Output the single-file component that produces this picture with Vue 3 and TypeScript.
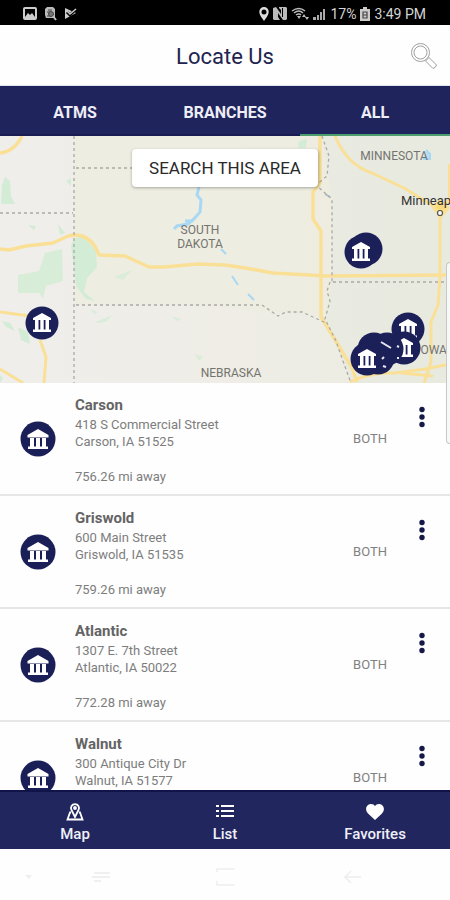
<script setup lang="ts">
import { ref } from 'vue'

interface Place {
  name: string
  street: string
  city: string
  distance?: string
}

interface Pin {
  x: number
  y: number
  icon: boolean
}

const tabs: string[] = ['ATMS', 'BRANCHES', 'ALL']
const activeTab = ref('ALL')

const places: Place[] = [
  { name: 'Carson', street: '418 S Commercial Street', city: 'Carson, IA 51525', distance: '756.26 mi away' },
  { name: 'Griswold', street: '600 Main Street', city: 'Griswold, IA 51535', distance: '759.26 mi away' },
  { name: 'Atlantic', street: '1307 E. 7th Street', city: 'Atlantic, IA 50022', distance: '772.28 mi away' },
  { name: 'Walnut', street: '300 Antique City Dr', city: 'Walnut, IA 51577' },
]

const pins: Pin[] = [
  { x: 42, y: 323, icon: true },
  { x: 366, y: 249, icon: false },
  { x: 361, y: 252, icon: true },
  { x: 408, y: 329, icon: true },
  { x: 404, y: 348, icon: true },
  { x: 387, y: 349, icon: false },
  { x: 374, y: 349, icon: false },
  { x: 378, y: 358, icon: false },
  { x: 367, y: 359, icon: true },
]
</script>

<template>
  <div class="screen">
    <div class="status">
      <div class="status-group">
        <svg width="14" height="13" viewBox="0 0 14 13"><rect x="1" y="1" width="12" height="11" rx="1" fill="none" stroke="#ccc" stroke-width="2" /><path d="M2 10l3-4 2 2 2-2 3 4v2H2z" fill="#ccc" /></svg>
        <svg width="13" height="14" viewBox="0 0 13 14"><path d="M3 0h6l2 2v9H2L1 8V2z" fill="#bbb" /><path d="M4 3h4M3 5h3M3 9h3" stroke="#444" /><circle cx="7" cy="7" r="2.500" fill="#777" stroke="#444" /><path d="M9 9l3 4" stroke="#bbb" stroke-width="2" /></svg>
        <svg width="13" height="13" viewBox="0 0 13 13"><path d="M1 1l11 5L1 12z" fill="#ccc" /><path d="M3 5l3 3 6-6" fill="none" stroke="#000" stroke-width="3" /><path d="M3 4l3 3 6-5" fill="none" stroke="#ccc" stroke-width="1.500" /></svg>
      </div>
      <div class="status-group right">
        <svg width="10" height="14" viewBox="0 0 10 14"><path d="M5 0a4.700 4.700 0 00-4.700 5C.3 8 3 11 5 14c2-3 4.700-6 4.700-9A4.700 4.700 0 005 0zm0 2.500a2.500 2.500 0 110 5 2.500 2.500 0 010-5z" fill="#ddd" fill-rule="evenodd" /></svg>
        <svg width="14" height="13" viewBox="0 0 14 13"><path d="M0 1l3-1 5 7V3l-2-2V0h7l1 1v11l-1 1h-3L5 6v4l2 3H1l-1-1z" fill="#bbb" /><path d="M9.500 1v9" stroke="#000" /></svg>
        <svg width="18" height="13" viewBox="0 0 18 13"><path d="M1 4q7-5 13 0M3 6q5-4 9 0M5 8q3-2 5 0" fill="none" stroke="#bbb" stroke-width="1.500" /><path d="M6 9h4l-2 3zM11 10l2-3 2 3zM14 10h4l-2 3z" fill="#bbb" /></svg>
        <svg width="13" height="12" viewBox="0 0 13 12"><path d="M0 12V9h3v3zM4 12V7h2v5zM7 12V4h2v8zM10 12V1h2v11z" fill="#aaa" /></svg>
        <span>17%</span>
        <svg width="10" height="14" viewBox="0 0 10 14"><path d="M3 0h4v2h3v12H0V2h3z" fill="#ccc" /><path d="M3 5h4v6H3zM3 8h4" fill="none" stroke="#444" stroke-width="1.200" /></svg>
        <span>3:49 PM</span>
      </div>
    </div>

    <header class="header">
      <h1>Locate Us</h1>
      <button class="search" type="button" aria-label="Search">
        <svg width="28" height="28" viewBox="0 0 28 28" fill="none" stroke="#a0a0a0" stroke-width="1"><circle cx="10.500" cy="10.500" r="9" /><circle cx="10.500" cy="10.500" r="6.500" /><path d="M15.500 19l3.500-3.500 7.500 7.500q-.5 2.500-3.500 3.500z" /></svg>
      </button>
    </header>

    <nav class="tabs">
      <button v-for="tab in tabs" :key="tab" type="button" :class="{ active: tab === activeTab }" @click="activeTab = tab">{{ tab }}</button>
    </nav>

    <section class="map">
      <svg class="map-art" viewBox="0 136 450 247" preserveAspectRatio="xMidYMid slice">
        <defs>
          <linearGradient id="land" x1="0" x2="1">
            <stop offset="0" stop-color="#f0eeeb" />
            <stop offset=".5" stop-color="#efede6" />
            <stop offset="1" stop-color="#ebece1" />
          </linearGradient>
        </defs>
        <rect y="136" width="450" height="247" fill="url(#land)" />
        <path d="M74 136H325L332 200V285H340L326 316 262 311 200 305H74z" fill="#eeecdf" opacity=".75" />
        <path d="M322 136H450V383H350L326 320 332 282V200z" fill="#e7eadf" opacity=".7" />
        <g fill="#d3ecd5">
          <path d="M5 177l5 4 1 15 4 8H1l1-19z" />
          <path d="M18 275l21-4 6-18 17-4 1 32-17 5-3 13-4-6H18z" opacity=".85" />
          <path d="M71 246q2-10 13-9l12 14 1 16-10 11-3 14 11 9-9-2-10-13z" />
          <path d="M2 321l8 2 5 8-9-4zM18 327l10 5 2 12-9-4zM28 225l8 1-2 4zM58 224l7 9-5 2zM66 181l5-3v8z" />
          <path d="M114 277l18-7-9 10zM90 309l8 3-4 2zM95 322l18-7-7 7-9 1zM171 316l10 3-4 2zM194 354l9 3-4 4z" opacity=".75" />
          <path d="M299 141l8-2-1 9h-8zM0 375l3 3-3 5z" />
        </g>
        <g fill="none" stroke="#a8d8f3" stroke-width="2">
          <path d="M199 187l-2 8 4 5-1 12-6 7-6 5-11 2-3 3M193 221h-8" stroke-width="3" />
          <path d="M221 249l5 5M232 276l6 9M248 294l6 6" />
          <path d="M426 150l4 4v5h-7" fill="#b8dff4" />
          <path d="M325 194l5 3" stroke="#a7bdcb" />
        </g>
        <g fill="none" stroke="#f9e096" stroke-width="3.500" stroke-linejoin="round">
          <path d="M0 153q12-1 20-13l2-4" />
          <path d="M0 249l9 1 17-4 27-3 15-7q22-5 31 19l26 1 24 11h15l34-3 27 1q22 3 48 8l54 3 121-1" />
          <path d="M320 136v47l-7 9v27l8 12v86l13 21 18 30 5 14" />
          <path d="M335 136q12 29 37 37l32 15 36 22v68l-2 27-7 17v40l-7 21" stroke-width="3" />
          <path d="M450 164v36l-10 10" stroke-width="4" />
          <path d="M0 312l30 4M40 340l6 17-2 26M0 369l23 14" stroke-width="3" />
          <path d="M350 382q20-10 45-9l30-4 25-5M401 373l32 3" stroke-width="3" />
          <path d="M433 207l7-6 8 7-7 8z" fill="#f9d978" />
        </g>
        <path class="state-line" d="M74 136V383M76 168H132M0 213H73M76 305H262l16 11 8-4h16l24 11M322 136l7 20-2 20-11 9 9 8 7 6v83M450 282H330l-3 9 3 10-5 18 11 22 7 20 8 22" />
        <g class="map-label">
          <text x="200" y="234">SOUTH</text>
          <text x="200" y="248">DAKOTA</text>
          <text x="394" y="160">MINNESOTA</text>
          <text x="231" y="377">NEBRASKA</text>
          <text x="432" y="354">IOWA</text>
        </g>
        <text class="city" x="401" y="205">Minneap</text>
        <circle cx="440" cy="213" r="2.500" fill="#fff" stroke="#555" stroke-width="1.200" />
        <g v-for="(pin, i) in pins" :key="i" :transform="`translate(${pin.x} ${pin.y})`">
          <circle r="16.500" fill="#1c2058" />
          <path v-if="pin.icon" d="M0-10L-9-5v2H9v-2zM-7-3h3.500v10H-7zM-1.700-3h3.400v10h-3.400zM3.500-3H7v10H3.500zM-9 6.500H9V9H-9z" fill="#fff" />
        </g>
        <path d="M381 342l10 6M397 346l2 1M384 357l-2 2M397 358h2M383 366l3 1" stroke="#e8e8f2" stroke-width="2" />
      </svg>
      <button class="search-area" type="button">SEARCH THIS AREA</button>
      <div class="edge-panel"></div>
    </section>

    <main class="list">
      <article v-for="place in places" :key="place.name" class="row">
        <svg class="badge" viewBox="0 0 36 36"><circle cx="18" cy="18" r="17.500" fill="#1b1f57" /><path d="M18 8L7.500 14v2.500h21V14zM10 16h4v10h-4zM16 16h4v10h-4zM22 16h4v10h-4zM8 25.500h20V28H8z" fill="#fff" /></svg>
        <div class="details">
          <h2>{{ place.name }}</h2>
          <p>{{ place.street }}</p>
          <p>{{ place.city }}</p>
          <p v-if="place.distance" class="distance">{{ place.distance }}</p>
        </div>
        <span class="kind">BOTH</span>
        <button class="more" type="button" :aria-label="place.name + ' options'">
          <svg width="6" height="22" viewBox="0 0 6 22" fill="#161947"><circle cx="3" cy="3.500" r="2.700" /><circle cx="3" cy="11" r="2.700" /><circle cx="3" cy="18.500" r="2.700" /></svg>
        </button>
      </article>
    </main>

    <nav class="bottom">
      <a href="#map">
        <svg width="20" height="20" viewBox="0 0 20 20" fill="none" stroke="#fff" stroke-width="1.800"><path d="M6 10.500H5L2.500 17.500h15L15 10.500h-1" /><path d="M10 15L6.500 8a4 4 0 117 0z" fill="#22265f" /><circle cx="10" cy="6" r="1" /></svg>
        <span>Map</span>
      </a>
      <a href="#list">
        <svg width="20" height="20" viewBox="0 0 20 20" stroke="#fff" stroke-width="2"><path d="M1 4h3M1 9h3M1 14h3M6 4h13M6 9h13M6 14h13" /></svg>
        <span>List</span>
      </a>
      <a href="#favorites">
        <svg width="20" height="20" viewBox="0 0 20 20"><path d="M10 18L3 11.500C-1 7 2 2 6 2q3 0 4 2Q11 2 14 2c4 0 7 5 3 9.500z" fill="#fff" /></svg>
        <span>Favorites</span>
      </a>
    </nav>

    <div class="soft-keys">
      <svg width="8" height="6" viewBox="0 0 8 6"><path d="M0 1h7L4 5z" fill="#eee" /></svg>
      <svg width="20" height="14" viewBox="0 0 20 14" stroke="#ebebeb" stroke-width="1.500"><path d="M2 3h16M0 7h18M2 11h7" /></svg>
      <svg width="20" height="20" viewBox="0 0 20 20" fill="none" stroke="#eee" stroke-width="1.500"><path d="M1 5V2h18M1 14v4h18" /></svg>
      <svg width="20" height="16" viewBox="0 0 20 16" fill="none" stroke="#ededed" stroke-width="1.500"><path d="M18 8H2l6-6M2 8l6 6" /></svg>
    </div>
  </div>
</template>

<style>
body {
  margin: 0;
  background: #fff;
}
</style>

<style scoped>
.screen {
  display: flex;
  flex-direction: column;
  height: 100vh;
  min-height: 600px;
  overflow: hidden;
  background: #fefefe;
  font-family: Roboto, "Liberation Sans", sans-serif;
}
button {
  border: 0;
  padding: 0;
  background: none;
  font-family: inherit;
  cursor: pointer;
}
svg {
  display: block;
}
h1, h2, p {
  margin: 0;
}
.status {
  flex: none;
  display: flex;
  justify-content: space-between;
  align-items: center;
  height: 25px;
  padding: 2px 24px 0 23px;
  box-sizing: border-box;
  background: #000;
  color: #d5d5d5;
  font-size: 14px;
}
.status-group {
  display: flex;
  align-items: center;
  gap: 7px;
}
.right {
  gap: 4px;
}
.header {
  flex: none;
  position: relative;
  display: flex;
  align-items: center;
  justify-content: center;
  height: 61px;
  padding-top: 2px;
  box-sizing: border-box;
  border-bottom: 1px solid #dfe5ed;
}
h1 {
  color: #22244f;
  font-size: 22px;
  font-weight: 400;
}
.search {
  position: absolute;
  right: 12px;
  top: 17px;
}
.tabs {
  flex: none;
  display: grid;
  grid-template-columns: repeat(3, 1fr);
  height: 50px;
  background: #20245d;
}
.tabs button {
  padding-top: 5px;
  border-bottom: 2px solid #191c52;
  color: #eeeef6;
  font-size: 16px;
  font-weight: 700;
}
.tabs .active {
  border-bottom-color: #4d9d6f;
}
.map {
  flex: none;
  position: relative;
  height: 247px;
}
.map-art {
  width: 100%;
  height: 100%;
}
.state-line {
  fill: none;
  stroke: #aaa9a5;
  stroke-width: 1.3;
  stroke-dasharray: 3 3;
}
.map-label {
  fill: #74746f;
  font-size: 12px;
  text-anchor: middle;
}
.city {
  fill: #333;
  font-size: 13px;
}
.search-area {
  position: absolute;
  top: 13px;
  left: 50%;
  height: 38px;
  padding: 0 17px;
  transform: translateX(-50%);
  border-radius: 4px;
  background: #fff;
  box-shadow: 0 1px 3px rgba(0, 0, 0, .3);
  color: #292929;
  font-size: 17px;
  white-space: nowrap;
}
.edge-panel {
  position: absolute;
  z-index: 2;
  top: 126px;
  right: 0;
  width: 4px;
  height: 182px;
  box-sizing: border-box;
  border: 1px solid #c8c8c8;
  border-right: 0;
  border-radius: 5px 0 0 5px;
  background: #f8f8f8;
}
.list {
  flex: 1;
  min-height: 0;
  overflow: hidden;
}
.row {
  display: flex;
  align-items: center;
  height: 113px;
  padding: 0 25px 0 20px;
  box-sizing: border-box;
  border-bottom: 2px solid #e6e6e6;
}
.badge {
  width: 36px;
  height: 36px;
  margin-right: 19px;
}
.details {
  flex: 1;
  align-self: flex-start;
  padding-top: 13px;
  color: #7d7d7d;
  font-size: 13px;
  line-height: 17px;
}
h2 {
  margin-bottom: 2px;
  color: #646464;
  font-size: 15px;
  font-weight: 700;
  line-height: 18px;
}
.distance {
  margin-top: 18px;
}
.kind {
  margin-right: 32px;
  color: #818181;
  font-size: 13px;
}
.more {
  align-self: flex-start;
  margin-top: 23px;
}
.bottom {
  flex: none;
  display: grid;
  grid-template-columns: repeat(3, 1fr);
  height: 59px;
  box-sizing: border-box;
  border-top: 2px solid #111448;
  background: #22265f;
}
.bottom a {
  display: flex;
  flex-direction: column;
  align-items: center;
  padding-top: 10px;
  color: #f0f0f7;
  font-size: 15px;
  font-weight: 500;
  line-height: 24px;
  text-decoration: none;
}
.soft-keys {
  flex: none;
  display: grid;
  grid-template-columns: 67px 124px 127px 20px;
  align-items: center;
  height: 51px;
  padding: 4px 0 0 25px;
  box-sizing: border-box;
}
</style>
